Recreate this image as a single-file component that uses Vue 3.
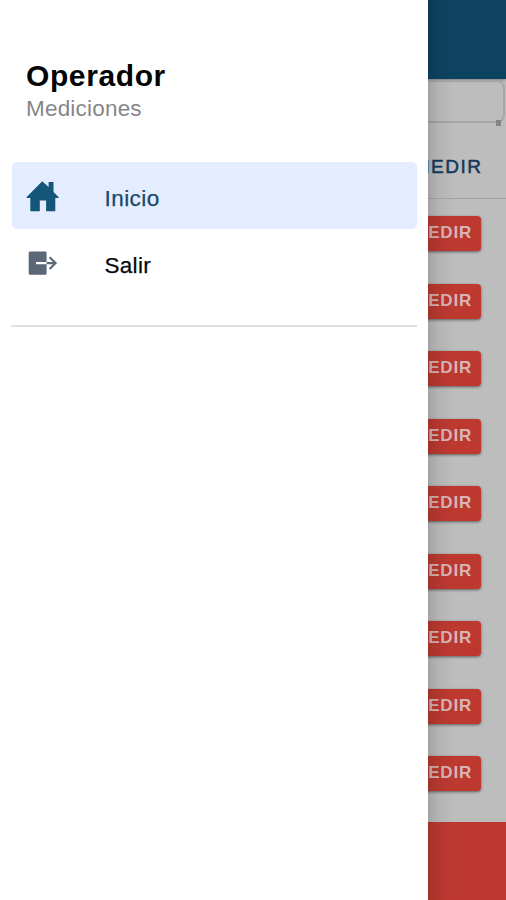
<script setup>
const rows = [1, 2, 3, 4, 5, 6, 7, 8, 9]
</script>

<template>
  <div class="app">
    <aside class="menu">
      <header class="menu-header">
        <h1>Operador</h1>
        <p>Mediciones</p>
      </header>
      <nav>
        <a class="item selected">
          <svg class="icon" viewBox="0 0 34 34">
            <path d="M16.2 2.300 22.600 8V2.900h4.900v10.200l5 4.900v.9H29.300V32.200H20.100V21.600H13.800V32.200H4.300V18.900H.7V18Z" />
          </svg>
          <span>Inicio</span>
        </a>
        <a class="item">
          <svg class="icon exit" viewBox="0 0 34 34">
            <path d="M4 5.400H19.300q1.300 0 1.300 1.300V15.900H10V18.300H20.600V27.500q0 1.300-1.300 1.300H4q-1.300 0-1.300-1.300V6.700q0-1.300 1.300-1.300Z" />
            <path class="arrow" d="M20.600 17.100H29.500M23.600 11.200l6 5.900-6 5.900" />
          </svg>
          <span>Salir</span>
        </a>
      </nav>
    </aside>
    <main class="page">
      <div class="toolbar"></div>
      <div class="search"><i class="grip"></i></div>
      <div class="column-head">MEDIR</div>
      <div class="list">
        <div v-for="row in rows" :key="row" class="row">
          <button>MEDIR</button>
        </div>
      </div>
      <footer></footer>
    </main>
  </div>
</template>

<style>
body { margin: 0; }
</style>

<style scoped>
.app {
  display: flex;
  height: 900px;
  overflow: hidden;
  font-family: "Liberation Sans", Arial, sans-serif;
  background: #fff;
}
.menu {
  box-sizing: border-box;
  flex: 0 0 428px;
  padding: 59px 11px 0;
  background: #fff;
}
.menu-header { height: 103px; padding-left: 15px; }
h1 {
  margin: 0;
  font-size: 30px;
  line-height: 34px;
  letter-spacing: 0.6px;
  color: #050505;
}
p {
  margin: 3px 0 0;
  font-size: 22.5px;
  line-height: 26px;
  letter-spacing: 0.2px;
  color: #85868a;
}
nav {
  height: 163px;
  border-bottom: 2px solid #e0e0e0;
}
.item {
  display: flex;
  align-items: center;
  box-sizing: border-box;
  height: 67px;
  margin-left: 1px;
  padding-left: 14px;
  border-radius: 5px;
  font-size: 22.5px;
  color: #080808;
}
.item span {
  padding-top: 7px;
  letter-spacing: 0.3px;
  -webkit-text-stroke: 0.25px currentColor;
}
.item.selected {
  background: #e4edff;
  color: #17486b;
}
.item.selected span {
  padding-top: 6px;
  letter-spacing: 0.45px;
}
.icon {
  width: 34px;
  height: 34px;
  margin-right: 44.5px;
  fill: #14557a;
}
.exit { fill: #5a6878; }
.arrow { fill: none; stroke: #5a6878; stroke-width: 2.1; }
.page {
  position: relative;
  display: flex;
  flex-direction: column;
  flex: 1;
  min-width: 0;
  overflow: hidden;
  background: #bdbdbd;
}
.page::before {
  content: "";
  position: absolute;
  z-index: 1;
  inset: 0 auto 0 0;
  width: 26px;
  background: linear-gradient(90deg, rgba(0, 0, 0, 0.14), rgba(0, 0, 0, 0.06) 35%, transparent);
}
.toolbar {
  flex: 0 0 79px;
  background: #0d4361;
  box-shadow: 0 1px 3px rgba(0, 0, 0, 0.35);
}
.search {
  position: relative;
  box-sizing: border-box;
  flex: 0 0 43px;
  margin: 1px 1px 0 -10px;
  border: 2px solid #a6a6a6;
  border-radius: 8px;
}
.grip {
  position: absolute;
  right: 2px;
  bottom: -5px;
  width: 5px;
  height: 6px;
  background: #858585;
}
.column-head {
  box-sizing: border-box;
  display: flex;
  justify-content: flex-end;
  flex: 0 0 76px;
  padding: 32px 23.5px 0 0;
  border-bottom: 1px solid #a5a5a5;
  font-size: 19px;
  line-height: 23px;
  letter-spacing: 1.5px;
  color: #123a5b;
  -webkit-text-stroke: 0.5px #123a5b;
}
.list {
  flex: 0 0 623px;
  min-height: 0;
  height: 623px;
  box-sizing: border-box;
  padding-top: 17px;
}
.row {
  display: flex;
  justify-content: flex-end;
  height: 67.5px;
  padding-right: 25px;
}
.row:last-child { height: 60px; }
button {
  flex-shrink: 0;
  box-sizing: border-box;
  width: 84px;
  height: 35px;
  padding: 0 9px 1px 0;
  border: 0;
  border-radius: 4px;
  background: #bd3930;
  box-shadow: 0 1px 3px rgba(0, 0, 0, 0.5);
  font: bold 17px "Liberation Sans", Arial, sans-serif;
  letter-spacing: 0.8px;
  text-align: right;
  color: #d9b4b6;
}
footer {
  flex: 0 0 78px;
  background: #bd3930;
}
</style>
